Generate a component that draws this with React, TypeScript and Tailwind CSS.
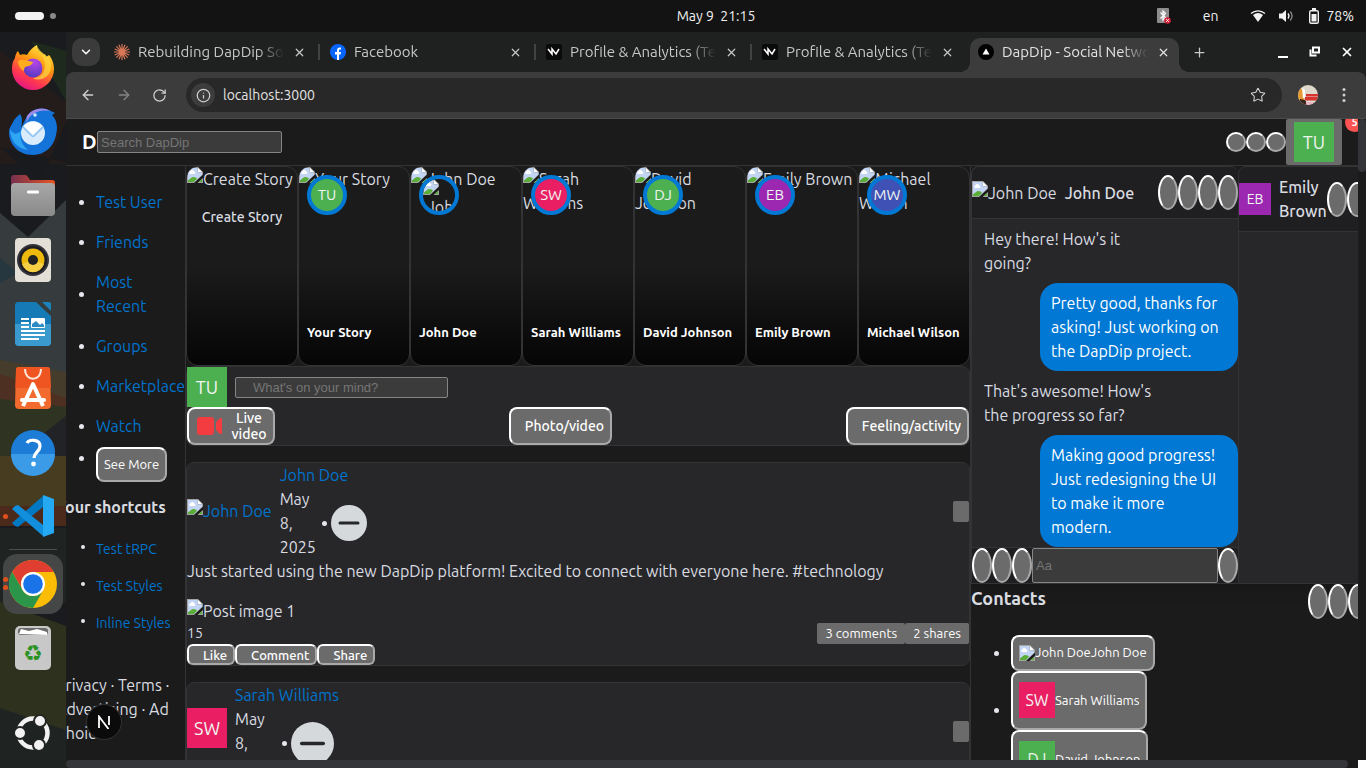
import React from "react";
import { ArrowLeft, ArrowRight, ChevronDown, Info, Plus, RotateCw, Star, X } from "lucide-react";

const bevel = "border-2 border-t-white border-l-white border-r-[#a9a9a9] border-b-[#a9a9a9] bg-[#6b6b6b]";

function BrokenImage({ className = "inline-block" }: { className?: string }) {
  return (
    <svg viewBox="0 0 16 16" className={`h-4 w-4 shrink-0 align-top ${className}`} aria-hidden="true">
      <path d="M0 0h11l5 5v11H0z" fill="#a3a3a3" />
      <path d="M1 1h9.600v4.400H15V8L7.500 15H1z" fill="#c3d5f5" />
      <path d="M11 1l4 4h-4z" fill="#fff" />
      <path d="M3 7a1.500 1.500 0 0 1 .6-2.800 2 2 0 0 1 3.700.3A1.300 1.300 0 0 1 7.500 7z" fill="#fff" />
      <path d="M1 15v-1.500c2-1.500 3.500-3.500 5.500-3.500 1.800 0 2.600.8 3.500 1.800L7 15z" fill="#5aad36" />
      <path d="M16 7.500V11l-5.500 5H7z" fill="#1b1b1b" />
      <path d="M15 12v3h-3.500z" fill="#5aad36" />
    </svg>
  );
}

function Avatar({ text, className }: { text: string; className: string }) {
  return <span className={`flex shrink-0 items-center justify-center text-[#f1f5f1] ${className}`}>{text}</span>;
}

function Oval({ label, className = "h-[35px]" }: { label: string; className?: string }) {
  return <button type="button" aria-label={label} className={`w-5 shrink-0 rounded-[50%] ${bevel} ${className}`} />;
}

/* ---------- desktop ---------- */

function TopBar() {
  return (
    <header className="grid h-8 shrink-0 grid-cols-3 items-center bg-[#131313] text-sm text-[#f0f0f0]">
      <div className="flex items-center gap-1.5 pl-[15px]">
        <span className="h-2 w-[29px] rounded-full bg-[#f2f2f2]" />
        <span className="h-1.5 w-1.5 rounded-full bg-[#8a8a8a]" />
      </div>
      <div className="whitespace-pre pl-[66px] text-center">May 9  21:15</div>
      <div className="flex items-center justify-end pr-3">
        <svg viewBox="0 0 15 16" className="mr-8 h-4 w-[15px]">
          <rect x="1" width="12" height="15" rx="1" fill="#8d8d8d" />
          <path d="M4.500 4.500l5 5L7 12V3l2.500 2.500-5 5" fill="none" stroke="#fff" strokeWidth="1.200" />
          <circle cx="11.500" cy="12.500" r="3.300" fill="#d42338" />
          <path d="M10.200 11.200l2.600 2.600m0-2.600l-2.600 2.600" stroke="#fff" />
        </svg>
        <span className="mr-8">en</span>
        <svg viewBox="0 0 16 14" className="mr-3 h-3.5 w-4">
          <path d="M1 4.500a10.500 10.500 0 0 1 14 0" fill="none" stroke="#f2f2f2" strokeWidth="1.300" />
          <path d="M3 6a8 8 0 0 1 10 0L8 13z" fill="#f2f2f2" />
        </svg>
        <svg viewBox="0 0 16 14" className="mr-3.5 h-3.5 w-4">
          <path d="M1 4.500h3L8 1v12L4 9.500H1z" fill="#f2f2f2" />
          <path d="M10 4.500q2 2.500 0 5" fill="none" stroke="#f2f2f2" strokeWidth="1.300" />
          <path d="M12.300 2.500q3.500 4.500 0 9" fill="none" stroke="#8a8a8a" strokeWidth="1.300" />
        </svg>
        <svg viewBox="0 0 12 16" className="mr-1.5 h-4 w-3">
          <path d="M4 0h4v2H4z" fill="#f2f2f2" />
          <rect x="1.700" y="2.700" width="8.600" height="12.600" rx="1.500" fill="none" stroke="#f2f2f2" strokeWidth="1.400" />
          <path d="M3.500 6h5v7.500h-5z" fill="#f2f2f2" />
        </svg>
        <span>78%</span>
      </div>
    </header>
  );
}

function Wallpaper() {
  return (
    <svg viewBox="0 0 66 736" preserveAspectRatio="none" className="absolute inset-0 h-full w-full" aria-hidden="true">
      <rect width="66" height="736" fill="#1a1b1e" />
      <path d="M0 18L66 70v62H0z" fill="#241c1b" />
      <path d="M31 9l35 10v50z" fill="#1f2a1e" />
      <path d="M0 115L66 130V90L40 150z" fill="#191a1e" />
      <path d="M0 181l28 24L66 168v200H0z" fill="#363b3d" />
      <path d="M0 226l18 15-18 10z" fill="#26373f" />
      <path d="M0 328l66 12v50H0z" fill="#453c2b" />
      <path d="M0 342l66 24v14l-66-10z" fill="#4d3022" />
      <path d="M0 367l66 8v85H0z" fill="#2e3322" />
      <path d="M66 384L0 436v18h66z" fill="#222326" />
      <path d="M0 424h66v64H0z" fill="#473b20" />
      <path d="M0 474h66v20H0z" fill="#4b2a1c" />
      <path d="M0 496h66v75H0z" fill="#1f2322" />
      <path d="M0 570l66 24v142H0z" fill="#2f311f" />
      <path d="M0 676l66 22v38H0z" fill="#1f2422" />
    </svg>
  );
}

const dockIcons: { name: string; art: React.ReactNode }[] = [
  {
    name: "Firefox",
    art: (
      <>
        <defs>
          <linearGradient id="ff" x1=".8" y1="0" x2=".3" y2="1">
            <stop offset="0" stopColor="#fff44f" /><stop offset=".4" stopColor="#ff980e" /><stop offset=".75" stopColor="#ff3750" /><stop offset="1" stopColor="#e31587" />
          </linearGradient>
          <radialGradient id="fp" cx=".6" cy=".2" r=".9"><stop offset="0" stopColor="#b944e8" /><stop offset="1" stopColor="#4a3bbd" /></radialGradient>
        </defs>
        <path d="M6 14c0-3 2-6 3-7l2 4c2-1 5-1 7 0 2-4 6-8 10-10 0 5 4 8 7 10l1-1 1 3 3-2c4 5 5 10 5 14a21 21 0 0 1-42 0c0-5 1-8 3-11z" fill="url(#ff)" />
        <circle cx="24" cy="24" r="9.500" fill="url(#fp)" />
        <path d="M9 17c5-3 11 0 15 1-1 4-5 4-8 5-1 2-1 3-1 4-4-2-6-6-6-10z" fill="#ffac1f" />
        <path d="M28 1c0 8 8 9 8 20 0 8-5 13-12 13 6 4 18 0 18-12C42 10 30 10 28 1z" fill="#ffd53d" opacity=".75" />
      </>
    ),
  },
  {
    name: "Thunderbird",
    art: (
      <>
        <path d="M18 8c4-6 12-9 19-7 4 1 6 3 9 4l-3 2c5 5 6 12 4 20-2 11-11 20-23 20C9 47 0 36 0 24c0-4 2-6 4-10 2-4 5-6 7-8 3 4 2 9 1 14z" fill="#1373d9" />
        <path d="M18 8c4-6 12-9 19-7l4 2c-10-2-17 2-21 7l-3 5z" fill="#9d8ae8" />
        <path d="M1 21c0 12 8 20 18 21-8-6-9-16-6-20C9 26 5 28 1 21z" fill="#2fa6f4" />
        <ellipse cx="24" cy="25" rx="12" ry="12" fill="#d8ecfd" />
        <path d="M14 19l9 9q1 1 2 0l9-9" fill="none" stroke="#8fc2ef" strokeWidth="1.600" />
        <path d="M15 18a12 12 0 0 1 18 0l-9 9z" fill="#fff" />
        <circle cx="26" cy="7" r="1.800" fill="#cfe6ff" />
      </>
    ),
  },
  {
    name: "Files",
    art: (
      <>
        <defs><linearGradient id="fo"><stop offset="0" stopColor="#77304f" /><stop offset="1" stopColor="#e95420" /></linearGradient><linearGradient id="fg" x2="0" y2="1"><stop stopColor="#a7a7a7" /><stop offset="1" stopColor="#8a8a8a" /></linearGradient></defs>
        <path d="M2 6q0-3 3-3h11q2 0 3 2l2 3h22q3 0 3 3v20H2z" fill="url(#fo)" />
        <rect x="2" y="11" width="44" height="33" rx="4" fill="url(#fg)" />
        <rect x="18" y="18.500" width="12" height="3" rx="1" fill="#fff" />
      </>
    ),
  },
  {
    name: "Rhythmbox",
    art: (
      <>
        <rect x="6" y="2" width="36" height="44" rx="4" fill="#e3ded6" />
        <circle cx="24" cy="24" r="16" fill="#33343c" />
        <circle cx="24" cy="24" r="14" fill="#1d1d22" />
        <circle cx="24" cy="24" r="11.500" fill="#edb90d" />
        <path d="M13 28a11.500 11.500 0 0 0 22 0L24 24z" fill="#f7cf45" />
        <circle cx="24" cy="24" r="5" fill="#222" />
      </>
    ),
  },
  {
    name: "LibreOffice Writer",
    art: (
      <>
        <path d="M9 2h18l15 14v26q0 4-4 4H10q-4 0-4-4V6q0-4 3-4z" fill="#157ab5" />
        <path d="M6 24h36v18q0 4-4 4H10q-4 0-4-4z" fill="#3a99cd" />
        <path d="M33 2h7q2 0 2 2v7z" fill="#1b82bb" />
        <path d="M12 19h8m-8 4h8m-8 4h8m-8 4h24m-24 4h24m-24 4h18" stroke="#fff" strokeWidth="2.200" />
        <rect x="22" y="18" width="14" height="10" rx="1" fill="#fff" />
        <path d="M23 27v-3l4-3 4 4 2-2 2 2v2z" fill="#2b8cc5" />
      </>
    ),
  },
  {
    name: "App Center",
    art: (
      <>
        <path d="M10 3h28q3 0 3 3l1 35q0 4-4 4H10q-4 0-4-4L7 6q0-3 3-3z" fill="#f26a2e" />
        <path d="M10 3h28q3 0 3 3l1 18H6.500L7 6q0-3 3-3z" fill="#ef5520" />
        <path d="M16 5c0 13 16 13 16 0" fill="none" stroke="#ffe6da" strokeWidth="2" />
        <path d="M14 42l10-22 10 22" fill="none" stroke="#fff" strokeWidth="4" strokeLinejoin="round" />
        <path d="M13 36h22" stroke="#fff" strokeWidth="4" strokeLinecap="round" />
      </>
    ),
  },
  {
    name: "Help",
    art: (
      <>
        <circle cx="24" cy="24" r="22" fill="#1c7cd6" />
        <path d="M2 26a22 22 0 0 0 44 0z" fill="#3b9be6" />
        <path d="M18 15c2-4 13-4 13 3 0 6-6 6-6 12" fill="none" stroke="#fff" strokeWidth="3.200" />
        <circle cx="24.500" cy="36" r="2.400" fill="#fff" />
      </>
    ),
  },
  {
    name: "Visual Studio Code",
    art: (
      <>
        <path d="M34 4L3 31l3 3 3 1 25-20z" fill="#0079c2" />
        <path d="M34 44L3 17l3-3 3-1 25 20z" fill="#118fdc" />
        <path d="M34 3l11 4v34l-11 4z" fill="#25a9f2" />
      </>
    ),
  },
  {
    name: "Google Chrome",
    art: (
      <>
        <circle cx="24" cy="24" r="24" fill="#fbbc05" />
        <path d="M3.200 12A24 24 0 0 1 44.800 12H24a12 12 0 0 0-10.400 18z" fill="#df3e30" />
        <path d="M3.200 12L13.600 30A12 12 0 0 0 34.400 30L24 48A24 24 0 0 1 3.200 12z" fill="#2b9549" />
        <circle cx="24" cy="24" r="12" fill="#fff" />
        <circle cx="24" cy="24" r="9.800" fill="#1a73e8" />
      </>
    ),
  },
  {
    name: "Trash",
    art: (
      <>
        <rect x="6" y="2" width="36" height="44" rx="5" fill="#c8c8c8" />
        <rect x="9" y="4" width="30" height="7" rx="3" fill="#6b6b6b" />
        <path d="M10 10l2-5 8 2 8-2 10 3v3z" fill="#fff" />
        <text x="24" y="37" fontSize="22" textAnchor="middle" fill="#2b9324" fontFamily="DejaVu Sans, sans-serif">♻</text>
      </>
    ),
  },
];

function DockIcon({ index }: { index: number }) {
  const item = dockIcons[index];
  return (
    <button type="button" aria-label={item.name} className="flex h-16 w-full items-center justify-center">
      <svg viewBox="0 0 48 48" className="h-12 w-12">{item.art}</svg>
    </button>
  );
}

function Dock() {
  return (
    <nav aria-label="Dock" className="relative flex w-[66px] shrink-0 flex-col overflow-hidden">
      <Wallpaper />
      <div className="relative flex min-h-0 flex-1 flex-col pt-1">
        {[0, 1, 2, 3, 4, 5, 6].map((i) => <DockIcon key={i} index={i} />)}
        <div className="relative">
          <DockIcon index={7} />
          <span className="absolute left-[3px] top-[30px] h-[5px] w-[5px] rounded-full bg-[#e0501c]" />
        </div>
        <div className="mx-auto mb-1 mt-px h-px w-12 shrink-0 bg-[#4d4d4a]" />
        <div className="relative mx-[3px] flex h-[60px] shrink-0 items-center overflow-hidden rounded-[14px] bg-[#444746]">
          <DockIcon index={8} />
          <span className="absolute left-0 top-[23px] h-[5px] w-[5px] rounded-full bg-[#e0501c]" />
          <span className="absolute left-0 top-[31px] h-[5px] w-[5px] rounded-full bg-[#e0501c]" />
        </div>
        <div className="mt-0.5"><DockIcon index={9} /></div>
        <button type="button" aria-label="Show applications" className="mb-4 mt-auto flex justify-center">
          <svg viewBox="0 0 38 38" className="h-[38px] w-[38px]">
            <circle cx="19" cy="19" r="14.500" fill="none" stroke="#f2f2f2" strokeWidth="4.500" />
            {[[6, 19], [26, 7], [25, 31]].map(([cx, cy]) => <circle key={cx} cx={cx} cy={cy} r="6" fill="#f2f2f2" stroke="#222622" strokeWidth="2" />)}
          </svg>
        </button>
      </div>
    </nav>
  );
}

/* ---------- browser ---------- */

const favicons = {
  claude: <path d="M8 0v16M0 8h16M2.300 2.300l11.400 11.400M13.700 2.300L2.300 13.700M5 .7l6 14.600M.7 5l14.600 6M11 .7L5 15.300M15.300 5L.7 11" stroke="#d97757" strokeWidth="1.200" />,
  facebook: (
    <>
      <circle cx="8" cy="8" r="8" fill="#0866ff" />
      <path d="M7 16v-5.500H5V8h2V6.500C7 4 8.500 3 11 3.500v2c-1.500-.2-2 .3-2 1.200V8h2l-.4 2.500H9V16z" fill="#fff" />
    </>
  ),
  profile: (
    <>
      <rect width="16" height="16" rx="2" fill="#0a0a0a" />
      <path d="M2 5l4 5V5l4 5 3-5" fill="none" stroke="#fff" strokeWidth="1.500" />
    </>
  ),
  next: (
    <>
      <circle cx="8" cy="8" r="8" fill="#000" />
      <path d="M8 4.500l3.500 6h-7z" fill="#fff" />
    </>
  ),
};

const tabs: { icon: keyof typeof favicons; title: string; active?: boolean }[] = [
  { icon: "claude", title: "Rebuilding DapDip Social" },
  { icon: "facebook", title: "Facebook" },
  { icon: "profile", title: "Profile & Analytics (Test)" },
  { icon: "profile", title: "Profile & Analytics (Test)" },
  { icon: "next", title: "DapDip - Social Network", active: true },
];

function TabStrip() {
  return (
    <div className="flex h-10 shrink-0 bg-[#1f2020] text-[15px] text-[#c7c7c7]">
      <button type="button" aria-label="Search tabs" className="ml-1.5 mr-1.5 mt-1.5 flex h-7 w-7 shrink-0 items-center justify-center rounded-[10px] bg-[#3b3b3b] text-white">
        <ChevronDown size={14} strokeWidth={2.5} />
      </button>
      {tabs.map((tab, i) => (
        <div key={i} className={`relative mt-1.5 flex h-[34px] w-[216px] min-w-0 items-start ${tab.active ? "text-[#e3e3e3]" : ""}`}>
          {tab.active && (
            <>
              <span className="absolute inset-y-0 left-0 right-[7px] rounded-t-[10px] bg-[#3c3c3c]" />
              <span className="absolute -left-2.5 bottom-0 h-2.5 w-2.5 bg-[radial-gradient(circle_at_0_0,transparent_10px,#3c3c3c_10px)]" />
              <span className="absolute -right-[3px] bottom-0 h-2.5 w-2.5 bg-[radial-gradient(circle_at_100%_0,transparent_10px,#3c3c3c_10px)]" />
            </>
          )}
          <div className="relative flex h-7 min-w-0 flex-1 items-center">
            <svg viewBox="0 0 16 16" className="ml-2 mr-2 h-4 w-4 shrink-0">{favicons[tab.icon]}</svg>
            <span className="w-[146px] overflow-hidden whitespace-nowrap [mask-image:linear-gradient(to_right,black_82%,transparent)]">{tab.title}</span>
            <button type="button" aria-label="Close tab" className="ml-[9px] shrink-0"><X size={13} strokeWidth={2.2} /></button>
            {i < 3 && <span className="ml-3 h-4 w-0.5 shrink-0 bg-[#414242]" />}
          </div>
        </div>
      ))}
      <button type="button" aria-label="New tab" className="ml-1.5 flex items-center"><Plus size={15} /></button>
      <div className="ml-auto mr-3 flex items-center gap-[19px] text-white">
        <button type="button" aria-label="Minimize" className="h-3 w-[13px] pt-2.5"><span className="ml-0.5 block h-0.5 w-2.5 bg-white" /></button>
        <button type="button" aria-label="Restore">
          <svg viewBox="0 0 13 12" className="h-3 w-[13px]"><path d="M5 1.500h6v5H5zM2.500 3.500v6h6" fill="none" stroke="#fff" strokeWidth="2" /></svg>
        </button>
        <button type="button" aria-label="Close window"><X size={14} strokeWidth={3} /></button>
      </div>
    </div>
  );
}

function Toolbar() {
  return (
    <div className="flex h-[47px] shrink-0 items-center rounded-t-lg border-b border-[#4b4b4d] bg-[#3c3c3c] pl-3.5 text-[#d0d0d0]">
      <button type="button" aria-label="Back" className="mr-5"><ArrowLeft size={16} /></button>
      <button type="button" aria-label="Forward" className="mr-5 text-[#848484]"><ArrowRight size={16} /></button>
      <button type="button" aria-label="Reload"><RotateCw size={15} /></button>
      <div className="ml-[19px] flex h-[34px] min-w-0 flex-1 items-center rounded-full bg-[#282828] pl-[5px] pr-4 text-sm">
        <span className="flex h-6 w-6 shrink-0 items-center justify-center rounded-full bg-[#3c3c3c]"><Info size={15} /></span>
        <input aria-label="Address" defaultValue="localhost:3000" className="ml-2 min-w-0 flex-1 bg-transparent text-[#e3e3e3] outline-none" />
        <button type="button" aria-label="Bookmark"><Star size={16} strokeWidth={1.6} /></button>
      </div>
      <button type="button" aria-label="Profile" className="ml-4">
        <svg viewBox="0 0 20 20" className="h-5 w-5">
          <defs><clipPath id="pc"><circle cx="10" cy="10" r="10" /></clipPath></defs>
          <g clipPath="url(#pc)">
            <path d="M0 0h20v20H0z" fill="#ddd8cb" />
            <path d="M0 4h4l3 6-1 6H0z" fill="#e59a36" />
            <path d="M4 3l3 2v8H5z" fill="#fff" />
            <path d="M8 9h12v2.500H8zM7 12h13v3.500H7z" fill="#d8322d" />
            <path d="M2 14l5 1 3 5H2z" fill="#3b2418" />
            <path d="M8 17h11v3H8z" fill="#e8b5c3" />
          </g>
        </svg>
      </button>
      <button type="button" aria-label="Menu" className="ml-4 mr-3">
        <svg viewBox="0 0 16 16" className="h-4 w-5"><g fill="#d0d0d0"><circle cx="8" cy="2.500" r="1.500" /><circle cx="8" cy="8" r="1.500" /><circle cx="8" cy="13.500" r="1.500" /></g></svg>
      </button>
    </div>
  );
}

/* ---------- DapDip page ---------- */

function SiteHeader() {
  return (
    <header className="flex h-[47px] shrink-0 items-center border-b border-[#333335] pl-4">
      <a href="#home" className="w-[15px] overflow-hidden text-xl font-bold text-white">DapDip</a>
      <input aria-label="Search" placeholder="Search DapDip" className="h-[22px] w-[185px] rounded-[2px] border border-[#858585] bg-[#3b3b3b] px-[3px] font-[Liberation_Sans,sans-serif] text-[13px] text-white placeholder:text-[#757575]" />
      <div className="ml-auto flex h-full items-center">
        <Oval label="Menu" className="h-5" />
        <Oval label="Messages" className="h-5" />
        <Oval label="Notifications" className="h-5" />
        <button type="button" aria-label="Account" className="flex h-full w-14 items-center justify-center rounded-[2px] bg-[#6b6b6b]">
          <Avatar text="TU" className="h-10 w-10 bg-[#4caf50] text-[18px]" />
        </button>
        <div className="flex h-full w-4 overflow-hidden">
          <span className="-mt-1.5 ml-[3px] flex h-[19px] w-[19px] shrink-0 items-center justify-center rounded-full bg-[#fb5252] text-[11px] font-bold text-white">5</span>
        </div>
      </div>
    </header>
  );
}

function Dot() {
  return <span className="h-[5px] w-[5px] shrink-0 rounded-full bg-[#e4e6eb]" />;
}

function Sidebar() {
  return (
    <aside className="w-[120px] shrink-0 overflow-hidden border-r border-[#333335] pt-4">
      <ul>
        {["Test User", "Friends", "Most Recent", "Groups", "Marketplace", "Watch"].map((label) => (
          <li key={label} className="flex items-center gap-3 py-2 pl-[13px] leading-6">
            <Dot />
            <a href="#nav" className={`text-[#0073cc] ${label === "Most Recent" ? "w-14" : "whitespace-nowrap"}`}>{label}</a>
          </li>
        ))}
        <li className="flex gap-3 pl-[13px]">
          <span className="pt-2.5"><span className="block h-[5px] w-[5px] rounded-full bg-[#e4e6eb]" /></span>
          <button type="button" className={`mt-px h-[35px] whitespace-nowrap rounded-lg px-1.5 text-[13px] text-white ${bevel}`}>See More</button>
        </li>
      </ul>
      <h2 className="-ml-2.5 mt-[13px] whitespace-nowrap font-bold leading-6">Your shortcuts</h2>
      <ul className="mt-3">
        {["Test tRPC", "Test Styles", "Inline Styles"].map((label) => (
          <li key={label} className="flex items-start gap-[11px] py-2 pl-[15px] text-sm leading-[21px]">
            <span className="mt-1.5 h-1 w-1 shrink-0 rounded-full bg-[#e4e6eb]" />
            <a href="#shortcut" className="whitespace-nowrap text-[#0073cc]">{label}</a>
          </li>
        ))}
      </ul>
      <p className="-ml-2.5 mt-[31px] whitespace-pre leading-6">{"Privacy · Terms ·\nAdvertising · Ad\nChoices"}</p>
    </aside>
  );
}

const stories = [
  { name: "Your Story", initials: "TU", color: "bg-[#4caf50]" },
  { name: "John Doe", initials: "", color: "bg-[#1b1b1b]" },
  { name: "Sarah Williams", initials: "SW", color: "bg-[#e91e63]" },
  { name: "David Johnson", initials: "DJ", color: "bg-[#4caf50]" },
  { name: "Emily Brown", initials: "EB", color: "bg-[#9c27b0]" },
  { name: "Michael Wilson", initials: "MW", color: "bg-[#3f51b5]" },
];

function Stories() {
  const card = "relative h-[200px] overflow-hidden rounded-xl border border-[#333335] bg-gradient-to-b from-[#1b1b1b] from-50% to-[#060606] leading-6";
  return (
    <section className="grid grid-cols-7">
      <div className={card}>
        <div className="whitespace-nowrap"><BrokenImage />Create Story</div>
        <p className="mt-3.5 text-center text-sm font-medium leading-6">Create Story</p>
      </div>
      {stories.map((s) => (
        <div key={s.name} className={card}>
          <div className={s.name === "Emily Brown" ? "whitespace-nowrap" : ""}><BrokenImage />{s.name}</div>
          <div className={`absolute left-2 top-2 flex h-10 w-10 justify-center overflow-hidden rounded-full border-4 border-[#0078d4] ${s.color}`}>
            {s.initials ? <span className="self-center text-[15px] text-[#f1f5f1]">{s.initials}</span> : <span className="w-8"><BrokenImage className="block" /><span className="block pl-1">John</span></span>}
          </div>
          <p className="absolute bottom-[21px] left-2 whitespace-nowrap text-[13px] font-bold leading-6 text-white">{s.name}</p>
        </div>
      ))}
    </section>
  );
}

function Composer() {
  const action = `flex h-[38px] items-center rounded-lg px-1.5 text-sm font-medium leading-4 text-white ${bevel}`;
  return (
    <section className="rounded-lg border border-[#333335] bg-[#27272a]">
      <div className="flex items-center gap-2">
        <Avatar text="TU" className="h-10 w-10 bg-[#4caf50] text-[18px]" />
        <input aria-label="Create post" placeholder="What's on your mind?" className="h-[21px] w-[213px] rounded-[2px] border border-[#858585] bg-[#3b3b3b] pl-[17px] font-[Liberation_Sans,sans-serif] text-[13px] text-white placeholder:text-[#757575]" />
      </div>
      <div className="flex justify-between">
        <button type="button" className={action}>
          <svg viewBox="0 0 28 20" className="mr-2 h-5 w-7"><rect x="2" y="1" width="17" height="18" rx="3" fill="#f23c40" /><path d="M21 6l4-4h2v16h-2l-4-4z" fill="#f23c40" /></svg>
          <span className="w-9 leading-4">Live video</span>
        </button>
        <button type="button" className={action}><span className="ml-2">Photo/video</span></button>
        <button type="button" className={action}><span className="ml-2">Feeling/activity</span></button>
      </div>
    </section>
  );
}

function PostHeader({ name, avatar, iconClass, dateClass }: { name: string; avatar: React.ReactNode; iconClass: string; dateClass: string }) {
  return (
    <div className="flex items-center gap-2 leading-6">
      <a href="#profile" className="shrink-0 text-[#0073cc]">{avatar}</a>
      <div>
        <a href="#profile" className="block text-[#0073cc]">{name}</a>
        <div className="flex items-center gap-1">
          <span className={`whitespace-pre ${dateClass}`}>{"May\n8,\n2025"}</span>
          <Dot />
          <svg viewBox="0 0 36 36" className={iconClass}><circle cx="18" cy="18" r="18" fill="#d6d9dc" /><path d="M9 18h18" stroke="#27272a" strokeWidth="3" strokeLinecap="round" /></svg>
        </div>
      </div>
      <button type="button" aria-label="Post options" className="ml-auto h-[21px] w-4 rounded-[2px] bg-[#6b6b6b]" />
    </div>
  );
}

function Feed() {
  const post = "mt-4 rounded-lg border border-[#333335] bg-[#27272a]";
  return (
    <>
      <article className={post}>
        <PostHeader name="John Doe" iconClass="h-9 w-9" dateClass="w-[38px]" avatar={<><BrokenImage />John Doe</>} />
        <p className="leading-6">Just started using the new DapDip platform! Excited to connect with everyone here. #technology</p>
        <p className="mt-4 leading-6"><BrokenImage />Post image 1</p>
        <div className="flex h-[21px] text-sm leading-[21px]">
          <span>15</span>
          <button type="button" className="ml-auto rounded-[2px] bg-[#6b6b6b] px-2 text-[13px] text-white">3 comments</button>
          <button type="button" className="rounded-[2px] bg-[#6b6b6b] px-2 text-[13px] text-white">2 shares</button>
        </div>
        <div className="flex">
          {["Like", "Comment", "Share"].map((label) => (
            <button key={label} type="button" className={`h-[21px] rounded-md pl-3.5 pr-1.5 text-[13px] font-medium leading-4 text-white ${bevel}`}>{label}</button>
          ))}
        </div>
      </article>
      <article className={post}>
        <PostHeader name="Sarah Williams" iconClass="h-[43px] w-[43px]" dateClass="w-[43px]" avatar={<Avatar text="SW" className="mb-1.5 h-10 w-10 bg-[#e91e63] text-[18px]" />} />
      </article>
    </>
  );
}

function Message({ text, mine }: { text: string; mine?: boolean }) {
  return <p className={`whitespace-pre py-2 leading-6 ${mine ? "w-[198px] self-end rounded-[18px] bg-[#0078d4] px-[11px] text-white" : "px-3"}`}>{text}</p>;
}

function Chats() {
  return (
    <div className="flex h-[418px] shadow-lg">
      <section className="flex w-[267px] shrink-0 flex-col rounded-t-lg border-y border-l border-[#333335] bg-[#27272a]">
        <div className="flex h-[52px] shrink-0 items-center rounded-t-lg border-b border-[#333335] bg-[#1f1f21] leading-6">
          <span className="whitespace-nowrap"><BrokenImage />John Doe</span>
          <span className="ml-2 whitespace-nowrap font-medium">John Doe</span>
          <div className="ml-auto flex">{["Call", "Video", "Minimize", "Close"].map((l) => <Oval key={l} label={l} />)}</div>
        </div>
        <div className="flex min-h-0 flex-1 flex-col">
          <Message text={"Hey there! How's it\ngoing?"} />
          <Message mine text={"Pretty good, thanks for\nasking! Just working on\nthe DapDip project."} />
          <Message text={"That's awesome! How's\nthe progress so far?"} />
          <Message mine text={"Making good progress!\nJust redesigning the UI\nto make it more\nmodern."} />
        </div>
        <div className="flex shrink-0 border-t border-[#333335] bg-[#1f1f21]">
          {["Attach", "Photo", "Emoji"].map((l) => <Oval key={l} label={l} />)}
          <input aria-label="Message" placeholder="Aa" className="min-w-0 flex-1 rounded-[2px] border border-[#858585] bg-[#3b3b3b] px-[3px] font-[Liberation_Sans,sans-serif] text-[13px] placeholder:text-[#757575]" />
          <Oval label="Send" />
        </div>
      </section>
      <section className="w-[268px] shrink-0 rounded-t-lg border border-[#333335] bg-[#27272a]">
        <div className="flex h-[65px] items-center rounded-t-lg border-b border-[#333335] bg-[#1f1f21]">
          <Avatar text="EB" className="h-8 w-8 bg-[#9c27b0] text-sm" />
          <span className="ml-2 w-12 shrink-0 font-medium leading-6">Emily Brown</span>
          {["Call", "Video", "Minimize"].map((l) => <Oval key={l} label={l} />)}
        </div>
      </section>
    </div>
  );
}

const contacts = [
  { name: "Sarah Williams", initials: "SW", color: "bg-[#e91e63]" },
  { name: "David Johnson", initials: "DJ", color: "bg-[#4caf50]" },
];

function RightColumn() {
  return (
    <aside className="w-[388px] shrink-0 overflow-hidden border-l border-[#333335]">
      <Chats />
      <div className="flex items-start">
        <h2 className="text-lg font-bold leading-7">Contacts</h2>
        <div className="-mr-2.5 ml-auto flex">{["New call", "Search", "Options"].map((l) => <Oval key={l} label={l} />)}</div>
      </div>
      <ul className="mt-4 pl-[23px] text-[13px]">
        <li className="flex items-center gap-3">
          <Dot />
          <button type="button" className={`flex h-9 items-center rounded-lg px-1.5 text-white ${bevel}`}>
            <BrokenImage />
            <span>John Doe</span>
            <span>John Doe</span>
          </button>
        </li>
        {contacts.map((c) => (
          <li key={c.name} className="flex items-center gap-3">
            <span className="pt-5"><span className="block h-[5px] w-[5px] rounded-full bg-[#e4e6eb]" /></span>
            <button type="button" className={`flex h-[59px] items-center rounded-lg px-1.5 text-white ${bevel}`}>
              <Avatar text={c.initials} className={`mb-0.5 h-9 w-9 text-base ${c.color}`} />
              <span>{c.name}</span>
            </button>
          </li>
        ))}
      </ul>
    </aside>
  );
}

function NextBadge() {
  return (
    <button type="button" aria-label="Developer tools" className="absolute bottom-5 left-5 flex h-9 w-9 items-center justify-center rounded-full border border-[#333] bg-[#0b0b0b]">
      <svg viewBox="0 0 14 14" className="h-3.5 w-3.5"><path d="M2 13V1.500L11.500 14M12 1v9" fill="none" stroke="#fff" strokeWidth="1.800" /></svg>
    </button>
  );
}

export default function App() {
  return (
    <div className="flex h-screen flex-col overflow-hidden bg-[#1b1b1b] font-[Ubuntu,Noto_Sans,sans-serif] text-base text-[#d9dbe0]">
      <TopBar />
      <div className="flex min-h-0 flex-1">
        <Dock />
        <div className="flex min-w-0 flex-1 flex-col bg-[#1f2020]">
          <TabStrip />
          <Toolbar />
          <div className="flex min-h-0 flex-1 bg-[#1b1b1b]">
            <div className="flex min-w-0 flex-1 flex-col">
              <div className="relative flex min-h-0 flex-1 flex-col overflow-hidden">
                <SiteHeader />
                <div className="flex min-h-0 flex-1 overflow-hidden">
                  <Sidebar />
                  <main className="min-w-0 flex-1">
                    <Stories />
                    <Composer />
                    <Feed />
                  </main>
                  <RightColumn />
                </div>
                <NextBadge />
              </div>
              <div className="h-2 shrink-0 pr-2.5"><div className="h-2 rounded-full bg-[#343538]" /></div>
            </div>
            <div className="flex w-2 shrink-0 flex-col">
              <div className="h-[53px] rounded-full bg-[#343538]" />
              <div className="mt-auto h-2 bg-white" />
            </div>
          </div>
        </div>
      </div>
    </div>
  );
}
